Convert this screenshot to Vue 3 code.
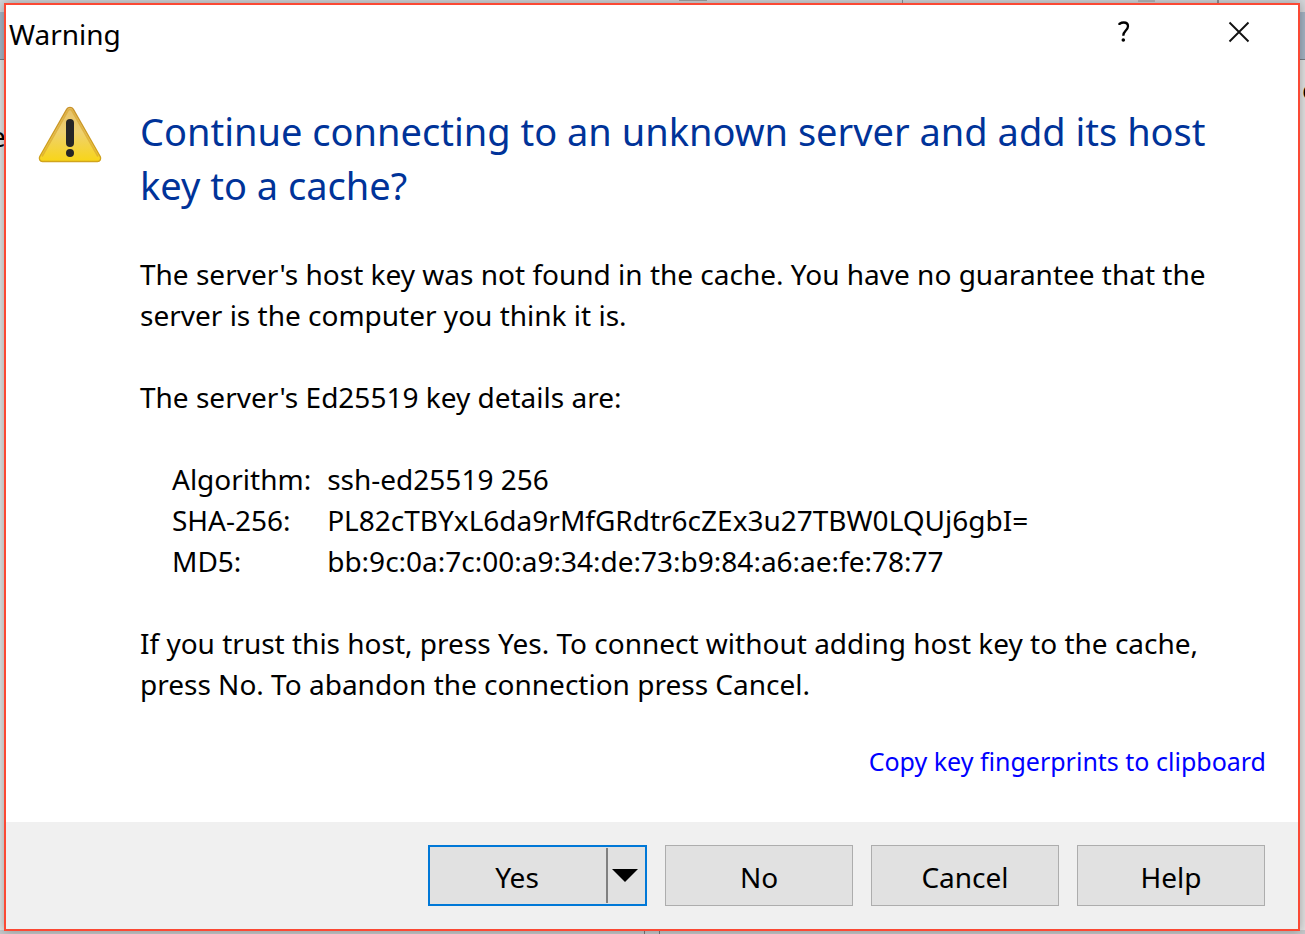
<script setup>
const details = [
  { label: 'Algorithm:', value: 'ssh-ed25519 256' },
  { label: 'SHA-256:', value: 'PL82cTBYxL6da9rMfGRdtr6cZEx3u27TBW0LQUj6gbI=' },
  { label: 'MD5:', value: 'bb:9c:0a:7c:00:a9:34:de:73:b9:84:a6:ae:fe:78:77' },
]
const actions = ['No', 'Cancel', 'Help']
</script>

<template>
  <div class="desktop">
    <div class="window-behind" aria-hidden="true">
      <div class="toolbar"><i class="tool"></i><i class="rule"></i><i class="tool small"></i><i class="rule thick"></i></div>
      <div class="caption"></div>
      <div class="pane"><span>e</span><span class="end">o</span></div>
      <div class="status"><i></i></div>
    </div>

    <section class="dialog" role="dialog" aria-labelledby="title">
      <header class="titlebar">
        <span id="title" class="title">Warning</span>
        <button class="tool-button help" type="button" aria-label="Context help">
          <svg width="12" height="22" viewBox="0 0 12 22">
            <path d="M1.500 4V2.800C3 1.900 4.300 1.500 5.800 1.500c2.600 0 4.200 1.400 4.200 3.800 0 2-1 3.200-2.500 4.500C6 11.200 5.300 12.300 5.300 14.800" fill="none" stroke="#000" stroke-width="2.300" />
            <circle cx="5.300" cy="19" r="1.800" />
          </svg>
        </button>
        <button class="tool-button" type="button" aria-label="Close">
          <svg width="22" height="22" viewBox="0 0 22 22">
            <path d="M1.500 1.500l19 19M20.500 1.500l-19 19" stroke="#111" stroke-width="1.900" />
          </svg>
        </button>
      </header>

      <main class="content">
        <svg class="warning" width="64" height="58" viewBox="0 0 64 58" aria-hidden="true">
          <defs>
            <linearGradient id="fill" x1="0" y1="0" x2="0" y2="1">
              <stop offset="0" stop-color="#e6c06a" />
              <stop offset=".45" stop-color="#efd170" />
              <stop offset="1" stop-color="#f8d517" />
            </linearGradient>
            <linearGradient id="edge" x1="0" y1="0" x2="0" y2="1">
              <stop offset="0" stop-color="#c8922a" />
              <stop offset="1" stop-color="#d1a41c" />
            </linearGradient>
          </defs>
          <path d="M28.800 3.200C30.200.800 33.800.800 35.200 3.200L62.200 50.500C63.500 53 62 55.500 59.500 55.500H4.500C2 55.500.500 53 1.800 50.500Z" fill="url(#fill)" stroke="url(#edge)" stroke-width="1.400" />
          <path d="M4 50.500L29.800 5C31 3 33 3 34.200 5L60 50.500" fill="none" stroke="#d9a832" stroke-width="1.600" opacity=".7" />
          <rect x="28" y="13" width="8" height="28" rx="4" fill="#262626" />
          <circle cx="32" cy="47" r="4" fill="#262626" />
        </svg>

        <div class="message">
          <h1>Continue connecting to an unknown server and add its host<br />key to a cache?</h1>
          <p>The server's host key was not found in the cache. You have no guarantee that the<br />server is the computer you think it is.</p>
          <p>The server's Ed25519 key details are:</p>
          <dl>
            <template v-for="d in details" :key="d.label">
              <dt>{{ d.label }}</dt>
              <dd>{{ d.value }}</dd>
            </template>
          </dl>
          <p>If you trust this host, press Yes. To connect without adding host key to the cache,<br />press No. To abandon the connection press Cancel.</p>
        </div>
      </main>

      <div class="link-row"><a href="#copy">Copy key fingerprints to clipboard</a></div>

      <footer class="footer">
        <div class="split">
          <button type="button" class="yes">Yes</button>
          <button type="button" class="drop" aria-label="More options">
            <svg width="26" height="13" viewBox="0 0 26 13"><path d="M0 0H26L13 13Z" /></svg>
          </button>
        </div>
        <button v-for="a in actions" :key="a" type="button" class="action">{{ a }}</button>
      </footer>
    </section>
  </div>
</template>

<style>
body {
  margin: 0;
  background: #d4d4d4;
}
</style>

<style scoped>
.desktop {
  position: relative;
  display: flex;
  box-sizing: border-box;
  min-height: 100vh;
  padding: 3px 5px 3px 4px;
  overflow: hidden;
  font-family: "Noto Sans", "Open Sans", sans-serif;
  font-size: 28px;
  line-height: 41px;
  color: #000;
}
.window-behind {
  position: absolute;
  inset: 0;
  display: flex;
  flex-direction: column;
  background: #e2e2e2;
}
.toolbar {
  display: flex;
  height: 12px;
  background: #d3d6d9;
}
.tool {
  width: 28px;
  height: 1px;
  margin-left: 52%;
  background: #a0a0a0;
}
.tool.small {
  width: 17px;
  height: 2px;
  margin-left: 18%;
  background: #b4b6b8;
}
.rule {
  width: 1px;
  margin-left: 15%;
  background: #8e9296;
}
.rule.thick {
  width: 2px;
  margin-left: 62px;
}
.caption {
  height: 47px;
  background: #a5b4c4;
  border-bottom: 1px solid #777d84;
}
.pane {
  display: flex;
  flex: 1;
  justify-content: space-between;
  padding-top: 56px;
}
.pane span {
  margin-left: -10px;
}
.pane .end {
  margin: -47px -14px 0 0;
}
.status {
  height: 4px;
  background: #c6c8ca;
}
.status i {
  display: block;
  box-sizing: border-box;
  width: 16px;
  height: 4px;
  margin-left: 644px;
  border-right: 1px solid #777;
  border-left: 1px solid #777;
}
.dialog {
  position: relative;
  display: flex;
  flex: 1;
  flex-direction: column;
  border: 2px solid #fb4934;
  background: #fff;
  box-shadow: 0 0 10px rgba(0, 0, 0, 0.3);
}
button {
  padding: 0;
  font: inherit;
  color: inherit;
  border: 0;
  background: none;
}
svg {
  display: block;
}
.titlebar {
  display: flex;
  align-items: center;
  height: 54px;
  padding: 0 37px 0 3px;
}
.title {
  flex: 1;
  padding-top: 4px;
}
.tool-button {
  display: flex;
  align-items: center;
  justify-content: center;
  width: 44px;
  height: 44px;
}
.help {
  margin-right: 71px;
}
.content {
  display: flex;
  gap: 38px;
  padding: 45px 32px 0;
}
.warning {
  flex: none;
  margin-top: 2px;
}
.message {
  flex: 1;
}
h1 {
  margin: 0 0 42px;
  font-size: 38px;
  font-weight: 400;
  line-height: 54px;
  color: #003399;
}
p {
  margin: 0 0 41px;
}
dl {
  display: grid;
  grid-template-columns: max-content 1fr;
  column-gap: 16px;
  margin: 0 0 41px;
  padding-left: 32px;
}
dd {
  margin: 0;
}
.message p:last-child {
  margin: 0;
}
.link-row {
  flex: 1;
  padding: 36px 32px 40px;
  font-size: 25px;
  text-align: right;
}
.link-row a {
  color: #0000ff;
  text-decoration: none;
}
.footer {
  display: flex;
  justify-content: flex-end;
  gap: 18px;
  padding: 23px 33px;
  background: #f0f0f0;
}
.action,
.split {
  box-sizing: border-box;
  height: 61px;
  border: 1px solid #adadad;
  background: #e1e1e1;
}
.action {
  width: 188px;
  padding-top: 4px;
}
.split {
  display: flex;
  width: 219px;
  padding: 1px 0;
  border: 2px solid #0078d7;
}
.yes {
  flex: 1;
  padding: 4px 2px 0 0;
}
.drop {
  display: flex;
  align-items: center;
  justify-content: center;
  width: 39px;
  padding-right: 3px;
  border-left: 2px solid #808080;
}
</style>
